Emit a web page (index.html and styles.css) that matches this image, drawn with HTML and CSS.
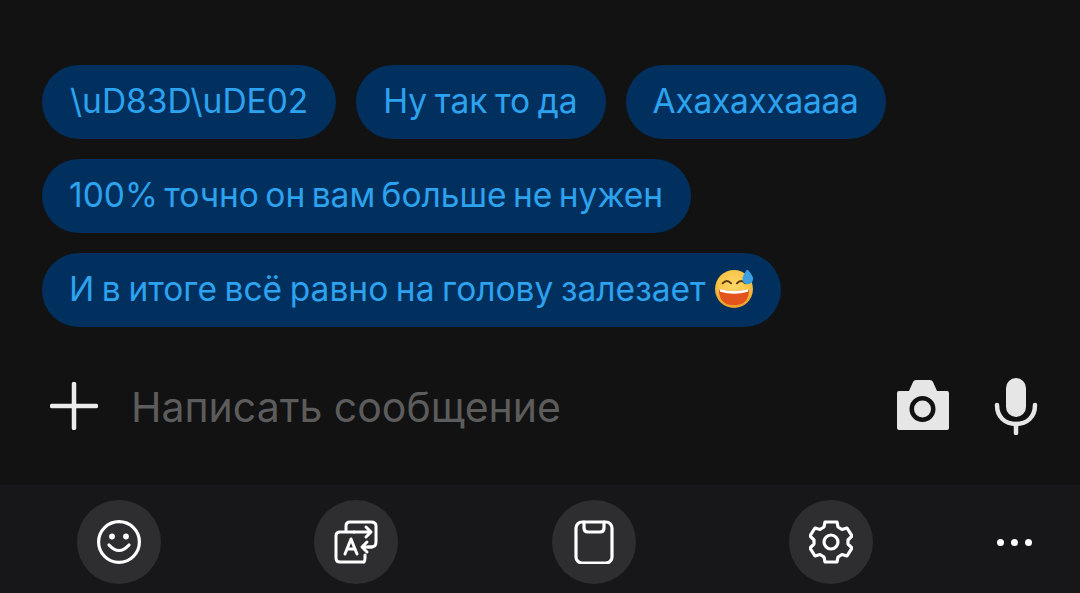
FILE: index.html
```html
<!DOCTYPE html>
<html lang="en">
<head>
    <meta charset="UTF-8">
    <meta name="viewport" content="width=device-width, initial-scale=1.0">
    <title>Chat</title>
    <link rel="stylesheet" href="styles.css">
</head>
<body>

    <div class="messages">
        <div class="row">
            <div class="chip chip-code">\uD83D\uDE02</div>
            <div class="chip">Ну так то да</div>
            <div class="chip chip-laugh">Ахахаххаааа</div>
        </div>
        <div class="row">
            <div class="chip chip-long">100% точно он вам больше не нужен</div>
        </div>
        <div class="row">
            <div class="chip">И в итоге всё равно на голову залезает
                <svg class="emoji" viewBox="0 0 40 40">
                    <defs>
                        <radialGradient id="face" cx="50%" cy="40%" r="60%">
                            <stop offset="0%" stop-color="#fdd868"/>
                            <stop offset="70%" stop-color="#f8c445"/>
                            <stop offset="100%" stop-color="#e89a28"/>
                        </radialGradient>
                    </defs>
                    <circle cx="20" cy="20" r="20" fill="url(#face)"/>
                    <path d="M4 20 Q20 24 36 20 Q36 37 20 37 Q4 37 4 20Z" fill="#e2541c"/>
                    <path d="M4.500 20 Q20 24 35.500 20 L34.500 23 Q20 27 5.500 23Z" fill="#fff"/>
                    <path d="M8 14 Q12.500 9 17 14 M23 14 Q27.500 9 32 14" fill="none" stroke="#5a3a14" stroke-width="2" stroke-linecap="round"/>
                    <path d="M34 -1 Q41 7 40 10 A5.500 5.500 0 0 1 29 9 Q29 6 34 -1Z" fill="#3c9fe0"/>
                </svg>
            </div>
        </div>
    </div>

    <div class="input-bar">
        <svg class="plus" viewBox="0 0 48 48">
            <path d="M24 2V46M2 24H46" stroke="#ececec" stroke-width="4.500" stroke-linecap="round"/>
        </svg>
        <div class="placeholder">Написать сообщение</div>
        <svg class="camera" viewBox="0 0 54 50">
            <path fill-rule="evenodd" fill="#e6e6e6" d="M3 11H13L17 2Q18 0 20 0H34Q36 0 37 2L41 11H51Q53 11 53 13V48Q53 50 51 50H3Q1 50 1 48V13Q1 11 3 11ZM26.500 16A13 13 0 1 0 26.500 42A13 13 0 1 0 26.500 16ZM26.500 20.500A8.500 8.500 0 1 1 26.500 37.500A8.500 8.500 0 1 1 26.500 20.500Z"/>
        </svg>
        <svg class="mic" viewBox="0 0 44 58">
            <rect x="12" y="1" width="20" height="39" rx="10" fill="#e6e6e6"/>
            <path d="M3 28C3 40 11 47 22 47C33 47 41 40 41 28" fill="none" stroke="#e6e6e6" stroke-width="4.500" stroke-linecap="round"/>
            <path d="M22 47V56" stroke="#e6e6e6" stroke-width="4.500" stroke-linecap="round"/>
        </svg>
    </div>

    <div class="toolbar">
        <button class="tool">
            <svg viewBox="0 0 44 44" fill="none" stroke="#fff" stroke-width="3.200" stroke-linecap="round" stroke-linejoin="round">
                <circle cx="22" cy="22" r="20.400"/>
                <path d="M12 25Q22 36 32 25"/>
                <circle cx="15" cy="16.500" r="1.300" fill="#fff"/>
                <circle cx="29" cy="16.500" r="1.300" fill="#fff"/>
            </svg>
        </button>
        <button class="tool">
            <svg viewBox="0 0 44 44" fill="none" stroke="#fff" stroke-width="3" stroke-linecap="round" stroke-linejoin="round">
                <path d="M12 11V6Q12 2 16 2H37Q42 2 42 6V22Q42 27 37 27H34"/>
                <path d="M29 42H6Q2 42 2 38V16Q2 12 6 12H20"/>
                <path d="M30 42Q31 41 31 38V35"/>
                <path d="M20 12H36M32 7L37 12L32 17"/>
                <path d="M38 27H29M33 22L28 27L33 32"/>
                <path d="M11 34L17 19L23 34M13 29H21"/>
            </svg>
        </button>
        <button class="tool">
            <svg viewBox="0 0 44 44" fill="none" stroke="#fff" stroke-width="3.200" stroke-linecap="round" stroke-linejoin="round">
                <rect x="4" y="2" width="36" height="41" rx="6"/>
                <path d="M12 2V8Q12 12 16 12H28Q32 12 32 8V2"/>
            </svg>
        </button>
        <button class="tool">
            <svg viewBox="0 0 44 44" fill="none" stroke="#fff" stroke-width="3.200" stroke-linecap="round" stroke-linejoin="round">
                <circle cx="22" cy="22" r="7"/>
                <path d="M16 2H28L29 7L33 9.500L38 8L43 16L39 20V24L43 28L38 36L33 34.500L29 37L28 42H16L15 37L11 34.500L6 36L1 28L5 24V20L1 16L6 8L11 9.500L15 7Z"/>
            </svg>
        </button>
        <div class="more">
            <span class="dot"></span>
            <span class="dot"></span>
            <span class="dot"></span>
        </div>
    </div>

</body>
</html>
```

FILE: styles.css
```css
body {
    font-family: Inter, "Noto Sans", sans-serif;
    margin: 0;
    padding: 0;
    width: 1080px;
    height: 593px;
    overflow: hidden;
    background-color: #121212;
    display: flex;
    flex-direction: column;
}

.messages {
    display: flex;
    flex-direction: column;
    gap: 20px;
    padding: 65px 0 0 42px;
}

.row {
    display: flex;
    gap: 20px;
}

.chip {
    display: flex;
    align-items: center;
    gap: 9px;
    height: 71px;
    padding: 0 28px 3px 27px;
    border-radius: 37px;
    background-color: #01305f;
    color: #2da2ee;
    font-size: 33.500px;
    word-spacing: -1.800px;
    white-space: nowrap;
}

.chip-code {
    padding-left: 28px;
}

.chip-laugh {
    letter-spacing: -0.300px;
}

.chip-long {
    word-spacing: -3px;
}

.emoji {
    width: 38px;
    height: 38px;
}

.input-bar {
    display: flex;
    align-items: center;
    height: 157px;
    padding: 0 0 1px 50px;
}

.plus {
    width: 48px;
    height: 48px;
}

.placeholder {
    margin: 3px 0 0 33px;
    color: #5c5c5c;
    font-size: 41px;
    width: 765px;
    white-space: nowrap;
}

.camera {
    width: 54px;
    height: 50px;
    margin-bottom: 2px;
}

.mic {
    width: 44px;
    height: 58px;
    margin-left: 44px;
}

.toolbar {
    flex: 1;
    display: flex;
    align-items: center;
    gap: 153.300px;
    padding: 6px 0 0 77px;
    background-color: #17171a;
}

.tool {
    display: flex;
    align-items: center;
    justify-content: center;
    width: 84px;
    height: 84px;
    padding: 0;
    border: none;
    border-radius: 50%;
    background-color: #2e2e31;
}

.tool svg {
    width: 44px;
    height: 44px;
}

.more {
    display: flex;
    gap: 7px;
    margin-left: -29px;
}

.dot {
    width: 7px;
    height: 7px;
    border-radius: 50%;
    background-color: #fff;
}
```
